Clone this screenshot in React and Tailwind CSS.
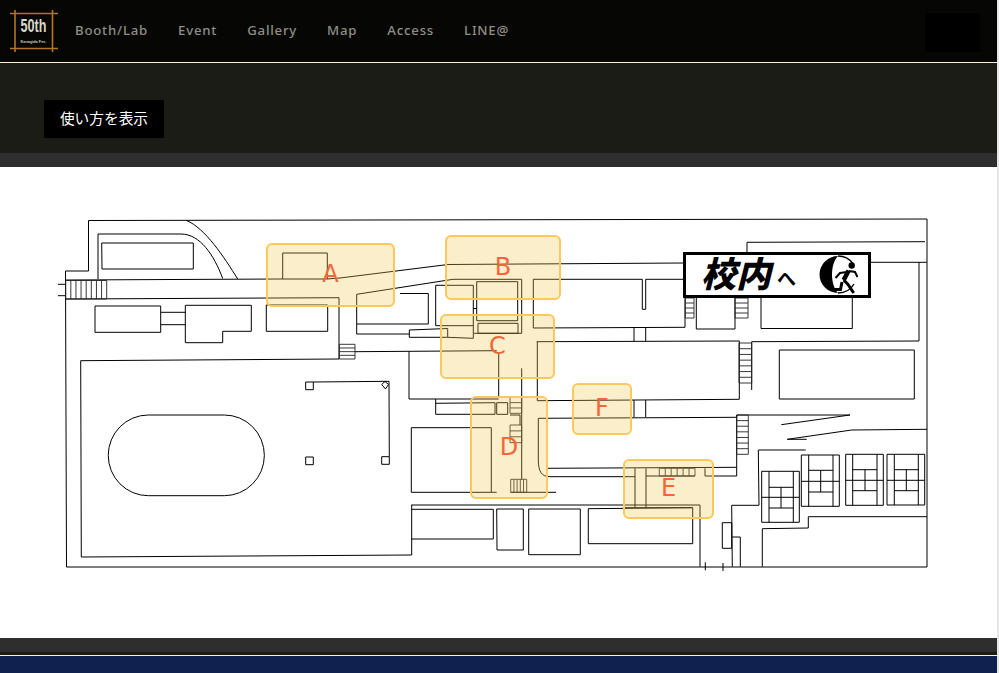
const navItems = ['Booth/Lab', 'Event', 'Gallery', 'Map', 'Access', 'LINE@'];

// horizontal stair treads between x1..x2
const treadsH = (x1, x2, y1, y2, n) => {
  let d = `M${x1} ${y1}V${y2}M${x2} ${y1}V${y2}`;
  for (let i = 0; i <= n; i++) {
    const y = y1 + ((y2 - y1) * i) / n;
    d += `M${x1} ${y}H${x2}`;
  }
  return d;
};

// vertical stair treads between y1..y2
const treadsV = (x1, x2, y1, y2, n) => {
  let d = `M${x1} ${y1}H${x2}M${x1} ${y2}H${x2}`;
  for (let i = 0; i <= n; i++) {
    const x = x1 + ((x2 - x1) * i) / n;
    d += `M${x} ${y1}V${y2}`;
  }
  return d;
};

const planLines = [
  // outer wall
  'M88.5 271V220.5L927 219V567H66.5L65.5 271H88.5',
  // drive at top left
  'M98 279V234H181C200 234 214 255 222.7 278.5',
  'M186.5 220.5C205 228 224 257 237.7 279',
  'M101.7 243H193.3V269H102Z',
  // corridor A
  'M65.5 280L282 279H327L340 278L448 264.5L683 263',
  'M65.5 299L339 297.7V359L80.7 360.7L81.3 557L411.7 555V505',
  'M282.7 279V253H327.3V279',
  'M58 284.3H65.5M58 295.7H65.5',
  // left blocks
  'M95 306H160.7V332.3H95Z',
  'M160.7 312.3H185.3M160.7 324.7H185.3',
  'M185.3 305.3H251.3V331.3H222.7V342.7H185.3Z',
  'M266.3 305H327.7V331.3H266.3Z',
  // field and track
  'M148.3 415H224.3A40 40.3 0 0 1 224.3 495.7H148.3A40 40.3 0 0 1 148.3 415Z',
  'M305.7 382H313.3V389.7H305.7ZM305.7 457H313.3V464.7H305.7ZM381.7 456.7H389.3V464.3H381.7Z',
  'M313.3 382L389 381.3L389.3 456.7M381.7 384.5L385 381.5L388.5 384.5L385.5 389Z',
  // centre north
  'M356.7 334V294.3L453 279.3H521.7V333.3H474',
  'M357 324H428.3V293.5H400M356.7 334H409.3',
  'M409.3 330L447.7 328.5V337.3H409.3Z',
  'M447.7 337.3L473.3 338.3V285.3H435.7V325.7H473.3',
  'M476.7 281.7H517.7V320.7H476.7ZM478 323.3H518V333.3H478ZM473.3 308.5H476.7',
  'M533.3 279.3H642.3V309.3H645.7V279.3H683M533.3 279.3V328L685 327.3V298',
  'M696.3 297V329H735V297M761 298V328.5H852.3V298',
  'M747 252V242.3L925 241.7M870 262.3H926.7M919 262.3V341L751.7 341.7V390',
  'M779.3 350H914.3V399H779.3Z',
  'M536.7 341.7L739.3 341V399.3L537.3 400.7V341.7',
  'M634 327.3V341M645.7 327.3V341M634 400V417.3M645.7 400V417.3',
  // centre mid
  'M355 351.7L496.7 350.7M409 351.3V399H498.7M498.7 353V398M521.7 368.3V479.3',
  'M435.7 399V414.3H495V402.7L435.7 403.3M496.7 402.7H507.7V414.3H496.7Z',
  'M510 415H520V425M411.3 427.7H491.3V492.3H411.3ZM491.3 492.3H496.7M510.7 492.3H556',
  // corridor to E
  'M538.3 418.3L736.7 417.3V415H850L781.3 424.7',
  'M538.3 418.3V460C538.3 472 542 476.7 550 476.7H635M546.7 468.3L736.7 467.3',
  'M705 468.3V476H736.7V415M646 476H695',
  'M635 468.3V507.7M646 468.3V507.7',
  // south row
  'M411.3 505H700V566.7M411.3 509.3H493.3V539H411.3',
  'M496.7 509H523.3V550H497ZM528.7 509H580.3V554.7H528.7Z',
  'M588.3 508.7L692.7 507.7V543.7H588.3ZM623 507.7H692.7',
  'M705.3 562.3V570.3M723 563V571',
  // wedge lines east
  'M787.3 439.3L851.7 430L927 429.3M787.3 439.3H806.7',
  // south east
  'M758.3 450H805.7M758.3 450L759 505.3H731.7L732.3 566.7',
  'M722.3 522.7H731.7V548.3H722.3ZM732.3 537H740.3V566.7',
  'M762.3 566.7V528.7L808.3 528V516.7H927',
  // east blocks
  'M761.7 471.3H799.3V522.3H761.7ZM769 471.3V522.3M793.3 471.3V522.3M761.7 497.3H799.3M769 487.3H793.3M769 508H793.3M781 487.3V508',
  'M801.3 455H839.3V506.3H801.3ZM808.7 455V506.3M833 455V506.3M801.3 481.3H839.3M808.7 470.3H833M808.7 492H833M820.7 470.3V492',
  'M845.7 454.3H883.3V505.3H845.7ZM852.7 454.3V505.3M877 454.3V505.3M845.7 480.3H883.3M852.7 469.7H877M852.7 490.7H877M865 469.7V490.7',
  'M887 454.3H924.7V505H887ZM894.3 454.3V505M918.3 454.3V505M887 480.3H924.7M894.3 469.7H918.3M894.3 490.7H918.3M906.3 469.7V490.7',
];

// stairs read lighter than walls in the plan
const stairLines = [
  treadsV(65.7, 106.7, 280.5, 299, 8),
  treadsH(339.3, 355, 344.3, 359, 4),
  treadsH(685.3, 694, 298, 318, 4),
  treadsH(735, 748, 298, 318, 4),
  treadsH(739, 751.7, 343, 383, 7),
  treadsH(736.7, 748.3, 415, 454.3, 7),
  treadsH(510, 521.7, 397.3, 413.3, 3),
  treadsH(510, 521.7, 425, 442.7, 3),
  treadsV(510.7, 526.7, 479.3, 492.3, 5),
  treadsV(659.3, 695, 468.3, 476, 6),
];

function Logo() {
  return (
    <svg width="50" height="44" viewBox="0 0 50 44" className="shrink-0">
      <g stroke="#b27527" strokeWidth="1.6">
        <path d="M1 4.5H49M1 39.5H49M6 1V43M43.5 1V43" />
      </g>
      <text x="11.5" y="23" fill="#d8d8c8" fontFamily="Liberation Sans, sans-serif" fontWeight="700" fontSize="18" textLength="26" lengthAdjust="spacingAndGlyphs">50th</text>
      <text x="11.5" y="33.5" fill="#c8c8b8" fontFamily="Liberation Sans, sans-serif" fontWeight="700" fontSize="4" textLength="26" lengthAdjust="spacingAndGlyphs">Kanagida Fes.</text>
    </svg>
  );
}

function ExitIcon() {
  return (
    <svg width="40" height="40" viewBox="0 0 40 40" className="shrink-0">
      <path d="M20 1A18.5 18.5 0 0 0 20 38C16 34 14 27 14 19.5S16 5 20 1Z" fill="#000" />
      <path d="M20 1A18.5 18.5 0 0 1 35 8.7M20 38A18.5 18.5 0 0 0 36 29" fill="none" stroke="#000" strokeWidth="1.4" />
      <circle cx="33.7" cy="10.5" r="3.2" fill="#000" />
      <path d="M30.7 15.5L25.7 25" fill="none" stroke="#000" strokeWidth="4.6" />
      <path d="M31 16L37 17L39.5 22M29 17L22 18L17.5 23" fill="none" stroke="#000" strokeWidth="2" />
      <path d="M25.7 25L30 29.5L35.7 38M24 27L22.5 34.5H15.5" fill="none" stroke="#000" strokeWidth="3" />
    </svg>
  );
}

function Zone({ label, className }) {
  return (
    <div className={`absolute flex items-center justify-center rounded-[6px] border-2 border-[#fcc75c] bg-[#f2c64e]/30 pb-[2px] text-[24px] leading-none text-[#f2663a] [font-family:'DejaVu_Sans',sans-serif] ${className}`}>
      {label}
    </div>
  );
}

export default function App() {
  return (
    <div className="flex h-[673px] w-full overflow-hidden bg-[#e6e6e6]">
      <div className="flex w-[997px] shrink-0 flex-col">
        <header className="flex h-[62px] shrink-0 items-center bg-[#060605] pl-[9px] pr-[17px]">
          <Logo />
          <nav className="ml-[16px] flex gap-[30px] text-[13.2px] font-medium tracking-[0.06em] text-[#8f8f84] [font-family:'Noto_Sans',sans-serif]">
            {navItems.map((item) => (
              <a key={item} href="#">{item}</a>
            ))}
          </nav>
          <div className="ml-auto mt-[3px] h-[39px] w-[55px] bg-black" />
        </header>

        <div className="h-px shrink-0 bg-[#f7f5d0]" />

        <div className="flex h-[90px] shrink-0 items-start bg-[#1c1c17] pl-[44px] pt-[37px]">
          <button className="h-[38px] w-[120px] bg-black pb-[2px] text-[14.7px] text-white [font-family:'Noto_Sans_CJK_JP',sans-serif]">
            使い方を表示
          </button>
        </div>

        <div className="h-[14px] shrink-0 bg-[#2e2e2e]" />

        <main className="relative h-[471px] shrink-0 bg-white">
          <svg width="997" height="471" viewBox="0 167 997 471" className="block">
            <path d={planLines.join('')} fill="none" stroke="#000" strokeWidth="1" />
            <path d={stairLines.join('')} fill="none" stroke="#222" strokeWidth="0.9" />
          </svg>

          <div className="absolute left-[683px] top-[85px] flex h-[46px] w-[188px] items-center border-[3px] border-black bg-white pl-[15px] text-black [font-family:'Noto_Sans_CJK_JP',sans-serif]">
            <span className="mb-[8px] text-[35px] font-black italic leading-none">校内</span>
            <span className="ml-[6px] mt-[4px] text-[19px] font-bold leading-none">へ</span>
            <span className="ml-auto mr-[10px]"><ExitIcon /></span>
          </div>

          <Zone label="A" className="left-[266px] top-[76px] h-[64px] w-[129px]" />
          <Zone label="B" className="left-[445px] top-[68px] h-[65px] w-[116px]" />
          <Zone label="C" className="left-[440px] top-[147px] h-[65px] w-[115px]" />
          <Zone label="D" className="left-[470px] top-[229px] h-[103px] w-[78px]" />
          <Zone label="F" className="left-[572px] top-[216px] h-[52px] w-[60px]" />
          <Zone label="E" className="left-[623px] top-[292px] h-[60px] w-[91px]" />
        </main>

        <div className="h-[14px] shrink-0 bg-[#2e2e2e]" />
        <div className="h-[3px] shrink-0 bg-[#1c1c17]" />
        <div className="h-px shrink-0 bg-[#f7f5d0]" />
        <div className="flex-1 bg-[#10204f]" />
      </div>
    </div>
  );
}
